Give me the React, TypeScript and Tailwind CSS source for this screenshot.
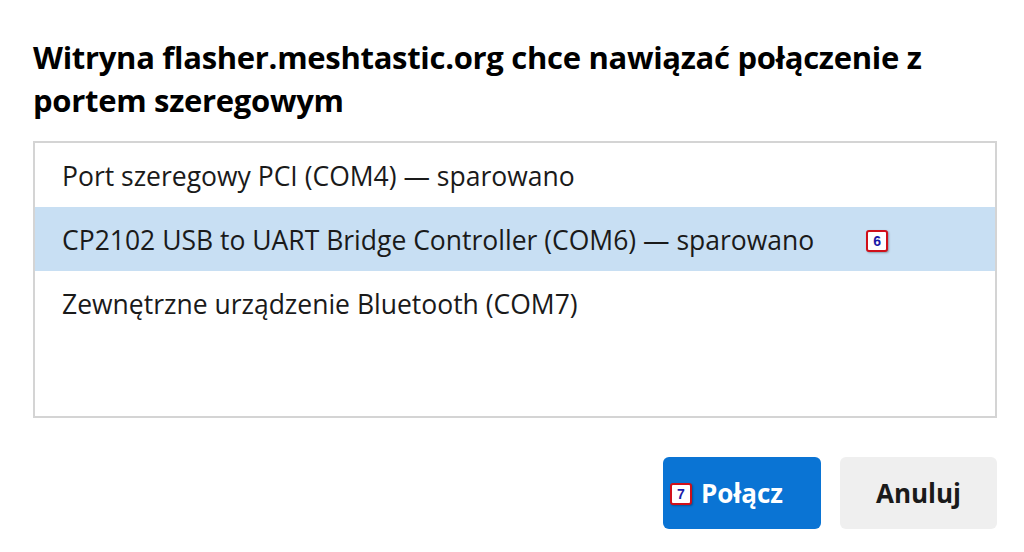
import React from "react";

function Badge({ n }: { n: string }) {
  return (
    <span className="inline-flex items-center justify-center w-[22px] h-[22px] bg-white border-[2px] border-[#d0101a] rounded-[3px] text-[14px] font-bold text-[#1a1aa8] leading-none shadow-[1px_1px_2px_rgba(0,0,0,0.3)]" style={{ fontFamily: "'Liberation Sans', Arial, sans-serif" }}>
      {n}
    </span>
  );
}

export default function App() {
  const rows = [
    { t: "Port szeregowy PCI (COM4) — sparowano", sel: false },
    { t: "CP2102 USB to UART Bridge Controller (COM6) — sparowano", sel: true },
    { t: "Zewnętrzne urządzenie Bluetooth (COM7)", sel: false },
  ];
  return (
    <div className="w-[1024px] h-[552px] bg-white overflow-hidden text-[#1a1a1a]" style={{ fontFamily: "'Open Sans', 'Noto Sans', sans-serif" }}>
      <div className="pt-[36px] pl-[33px] pr-[27px]">
        <h1 className="text-[31px] font-bold leading-[43px] text-black tracking-[-0.3px]">
          Witryna flasher.meshtastic.org chce nawiązać połączenie z
          <br />
          portem szeregowym
        </h1>
        <div className="mt-[19px] h-[277px] border-2 border-[#d4d4d4] flex flex-col">
          {rows.map((r, i) => (
            <div key={i} className={`h-[64px] flex items-center pl-[27px] pt-[3px] text-[26.5px] ${r.sel ? "bg-[#c8dff3]" : ""}`}>
              <span>{r.t}</span>
              {r.sel && <span className="ml-[52px] flex"><Badge n="6" /></span>}
            </div>
          ))}
        </div>
        <div className="mt-[39px] flex justify-end gap-[19px]">
          <button className="relative w-[158px] h-[72px] rounded-[6px] bg-[#0a74d4] text-white text-[26px] font-bold flex items-center justify-center">
            <span className="absolute left-[7px] top-[26px] flex"><Badge n="7" /></span>
            <span>Połącz</span>
          </button>
          <button className="w-[157px] h-[72px] rounded-[6px] bg-[#efefef] text-[#1a1a1a] text-[26px] font-bold">
            Anuluj
          </button>
        </div>
      </div>
    </div>
  );
}
